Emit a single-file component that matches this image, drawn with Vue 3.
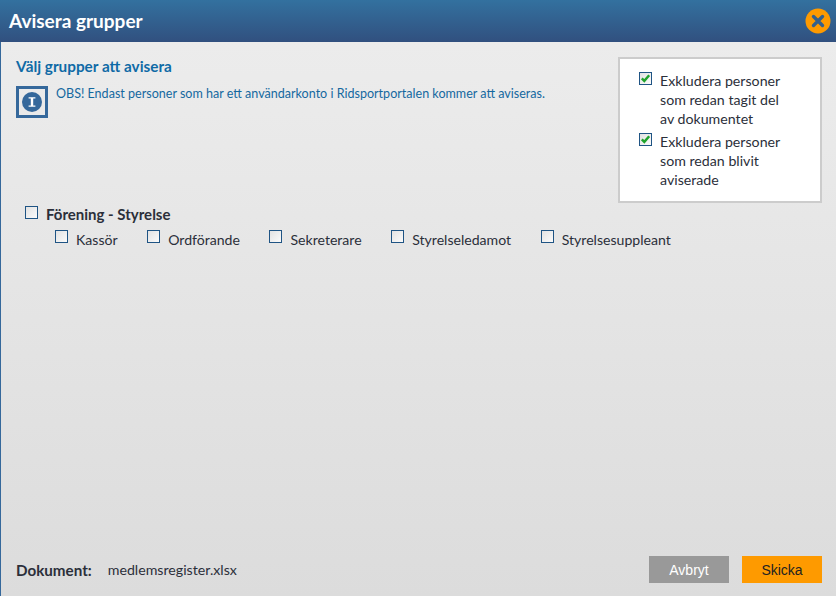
<template>
  <div class="dialog">
    <header class="dialog-head">
      <h1>Avisera grupper</h1>
      <button class="close" aria-label="Stäng">
        <svg width="26" height="26" viewBox="0 0 26 26">
          <circle cx="13" cy="13" r="12.5" fill="#fe9a00" />
          <path d="M8.5 8.5 L17.5 17.5 M17.5 8.5 L8.5 17.5" stroke="#35608c" stroke-width="3.4" stroke-linecap="round" />
        </svg>
      </button>
    </header>

    <main class="dialog-body">
      <section class="top">
        <div class="intro">
          <h2>Välj grupper att avisera</h2>
          <div class="notice">
            <span class="info-box">
              <svg width="22" height="22" viewBox="0 0 22 22">
                <circle cx="11" cy="11" r="10" fill="#35689b" />
                <path d="M7.6 6.2 H14.4 V7.6 H12.2 V14.4 H14.4 V15.8 H7.6 V14.4 H9.8 V7.6 H7.6 Z" fill="#fff" />
              </svg>
            </span>
            <p>OBS! Endast personer som har ett användarkonto i Ridsportportalen kommer att aviseras.</p>
          </div>
        </div>
        <div class="exclude">
          <label v-for="text in excludes" :key="text" class="exclude-row">
            <span class="check">
              <svg width="11" height="11" viewBox="0 0 11 11">
                <path d="M1.8 5.4 L4.3 7.9 L9.2 2.2" fill="none" stroke="#1fa32c" stroke-width="2.4" />
              </svg>
            </span>
            <span>{{ text }}</span>
          </label>
        </div>
      </section>

      <section class="groups">
        <label class="group-title">
          <span class="check"></span>
          <span>Förening - Styrelse</span>
        </label>
        <div class="roles">
          <label v-for="role in roles" :key="role" class="role">
            <span class="check"></span>
            <span>{{ role }}</span>
          </label>
        </div>
      </section>

      <footer class="dialog-foot">
        <div class="document">
          <strong>Dokument:</strong>
          <span>medlemsregister.xlsx</span>
        </div>
        <div class="actions">
          <button class="btn btn-cancel">Avbryt</button>
          <button class="btn btn-send">Skicka</button>
        </div>
      </footer>
    </main>
  </div>
</template>

<script setup>
const excludes = [
  'Exkludera personer som redan tagit del av dokumentet',
  'Exkludera personer som redan blivit aviserade'
]
const roles = ['Kassör', 'Ordförande', 'Sekreterare', 'Styrelseledamot', 'Styrelsesuppleant']
</script>

<style>
html, body { margin: 0; padding: 0; }
</style>

<style scoped>
.dialog {
  width: 836px;
  height: 596px;
  display: flex;
  flex-direction: column;
  font-family: "Lato", "Noto Sans", sans-serif;
  font-size: 14.2px;
  color: #2b2f3a;
  overflow: hidden;
}
.dialog-head {
  height: 42px;
  flex: none;
  box-sizing: border-box;
  display: flex;
  align-items: center;
  justify-content: space-between;
  padding: 0 5px 0 9px;
  background: linear-gradient(#33719f, #31507f);
}
.dialog-head h1 {
  margin: 0 0 1px;
  font-size: 19px;
  font-weight: 700;
  color: #fff;
}
.close {
  width: 26px;
  height: 26px;
  padding: 0;
  border: none;
  background: none;
  display: block;
}
.close svg { display: block; }
.dialog-body {
  flex: 1;
  box-sizing: border-box;
  border-left: 1px solid #35689b;
  background: linear-gradient(#ececec, #dcdcdc);
  display: flex;
  flex-direction: column;
  padding: 15px 14px 13px 15px;
}
.top {
  display: flex;
  justify-content: space-between;
  align-items: flex-start;
}
.intro h2 {
  margin: 0;
  font-size: 15.3px;
  line-height: 18px;
  font-weight: 700;
  color: #0f6aa6;
}
.notice {
  display: flex;
  gap: 8px;
  margin-top: 11px;
}
.info-box {
  width: 32px;
  height: 32px;
  box-sizing: border-box;
  border: 3px solid #35689b;
  display: flex;
  align-items: center;
  justify-content: center;
}
.notice p {
  margin: 0;
  font-size: 12.55px;
  line-height: 16px;
  color: #14689f;
}
.exclude {
  width: 204px;
  height: 146px;
  box-sizing: border-box;
  border: 2px solid #cccccc;
  background: #fff;
  padding: 12px 26px 0 19px;
  display: flex;
  flex-direction: column;
  gap: 4px;
}
.exclude-row {
  display: flex;
  gap: 8px;
  line-height: 19px;
}
.check {
  flex: none;
  box-sizing: border-box;
  width: 13px;
  height: 13px;
  border: 1px solid #1f5484;
  background: linear-gradient(135deg, #e2e2e2, #fbfbfb);
  display: block;
  margin-top: 1px;
}
.check svg { display: block; }
.groups {
  margin-top: 1px;
  padding-left: 9px;
}
.group-title {
  display: flex;
  gap: 8px;
  font-size: 15px;
  font-weight: 700;
  line-height: 20px;
}
.group-title .check { margin-top: 2px; }
.roles {
  display: flex;
  gap: 29.5px;
  margin-top: 6px;
  padding-left: 30px;
  font-size: 14.1px;
}
.role {
  display: flex;
  gap: 8px;
  line-height: 20px;
}
.role .check { margin-top: 0; }
.dialog-foot {
  margin-top: auto;
  display: flex;
  align-items: center;
  justify-content: space-between;
}
.document {
  display: flex;
  gap: 16px;
}
.document strong { font-size: 15.2px; }
.actions {
  display: flex;
  gap: 13px;
}
.btn {
  width: 80px;
  height: 27px;
  border: none;
  padding: 0;
  font-family: "Liberation Sans", sans-serif;
  font-size: 14px;
}
.btn-cancel { background: #999999; color: #fff; }
.btn-send { background: #fe9a00; color: #222; }
</style>
